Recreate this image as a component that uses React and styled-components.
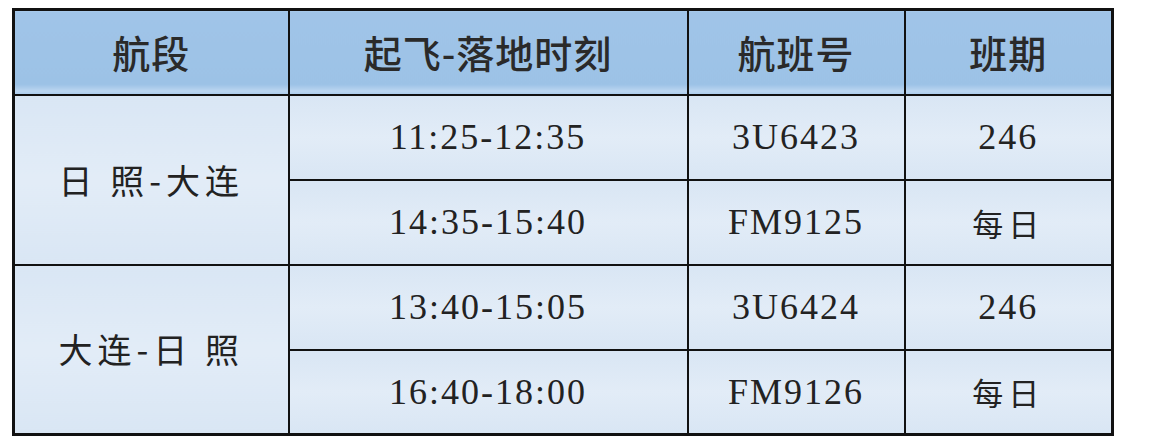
import React from "react";
import styled, { createGlobalStyle } from "styled-components";

const Global = createGlobalStyle`
  html, body { margin: 0; padding: 0; background: #ffffff; }
  body { width: 1162px; height: 448px; overflow: hidden; }
`;

const Page = styled.div`
  padding: 8px 0 0 12px;
`;

const Table = styled.table`
  width: 1099px;
  height: 425px;
  border-collapse: collapse;
  table-layout: fixed;
  border: 3px solid #111;
`;

const Row = styled.tr`
  height: 85px;
`;

const HeadCell = styled.th`
  border: 2.5px solid #111;
  background: linear-gradient(180deg, #a0c4e8 0%, #9cc2e6 88%, #bcd6f0 96%, #a9cbec 100%);
  color: #2a2a2a;
  font-family: "Noto Sans CJK SC", sans-serif;
  font-size: 38px;
  font-weight: 500;
  letter-spacing: 1px;
  line-height: 1;
  text-align: center;
  vertical-align: middle;
  padding: 0;
`;

const Cell = styled.td`
  border: 2.5px solid #111;
  background: linear-gradient(180deg, #d9e6f4 0%, #e2ecf7 50%, #d9e6f4 100%);
  color: #222;
  text-align: center;
  vertical-align: middle;
  padding: 0;
  line-height: 1;
  font-family: ${(p) =>
    p.$cjk ? `"Noto Sans CJK SC", sans-serif` : `"Liberation Serif", serif`};
  font-size: ${(p) => (p.$cjk ? (p.$small ? "31px" : "34px") : "36px")};
  letter-spacing: ${(p) => (p.$cjk ? "5px" : "2px")};
  font-weight: 400;
`;

const rows = [
  { route: "日 照-大连", time: "11:25-12:35", flight: "3U6423", days: "246" },
  { time: "14:35-15:40", flight: "FM9125", days: "每日" },
  { route: "大连-日 照", time: "13:40-15:05", flight: "3U6424", days: "246" },
  { time: "16:40-18:00", flight: "FM9126", days: "每日" },
];

export default function App() {
  return (
    <>
      <Global />
      <Page>
        <Table>
          <colgroup>
            <col style={{ width: "275px" }} />
            <col style={{ width: "399px" }} />
            <col style={{ width: "217px" }} />
            <col style={{ width: "208px" }} />
          </colgroup>
          <thead>
            <Row>
              <HeadCell>航段</HeadCell>
              <HeadCell>起飞-落地时刻</HeadCell>
              <HeadCell>航班号</HeadCell>
              <HeadCell>班期</HeadCell>
            </Row>
          </thead>
          <tbody>
            {rows.map((r, i) => (
              <Row key={i}>
                {r.route && (
                  <Cell rowSpan={2} $cjk>
                    {r.route}
                  </Cell>
                )}
                <Cell>{r.time}</Cell>
                <Cell>{r.flight}</Cell>
                {r.days === "每日" ? (
                  <Cell $cjk $small>
                    {r.days}
                  </Cell>
                ) : (
                  <Cell>{r.days}</Cell>
                )}
              </Row>
            ))}
          </tbody>
        </Table>
      </Page>
    </>
  );
}
